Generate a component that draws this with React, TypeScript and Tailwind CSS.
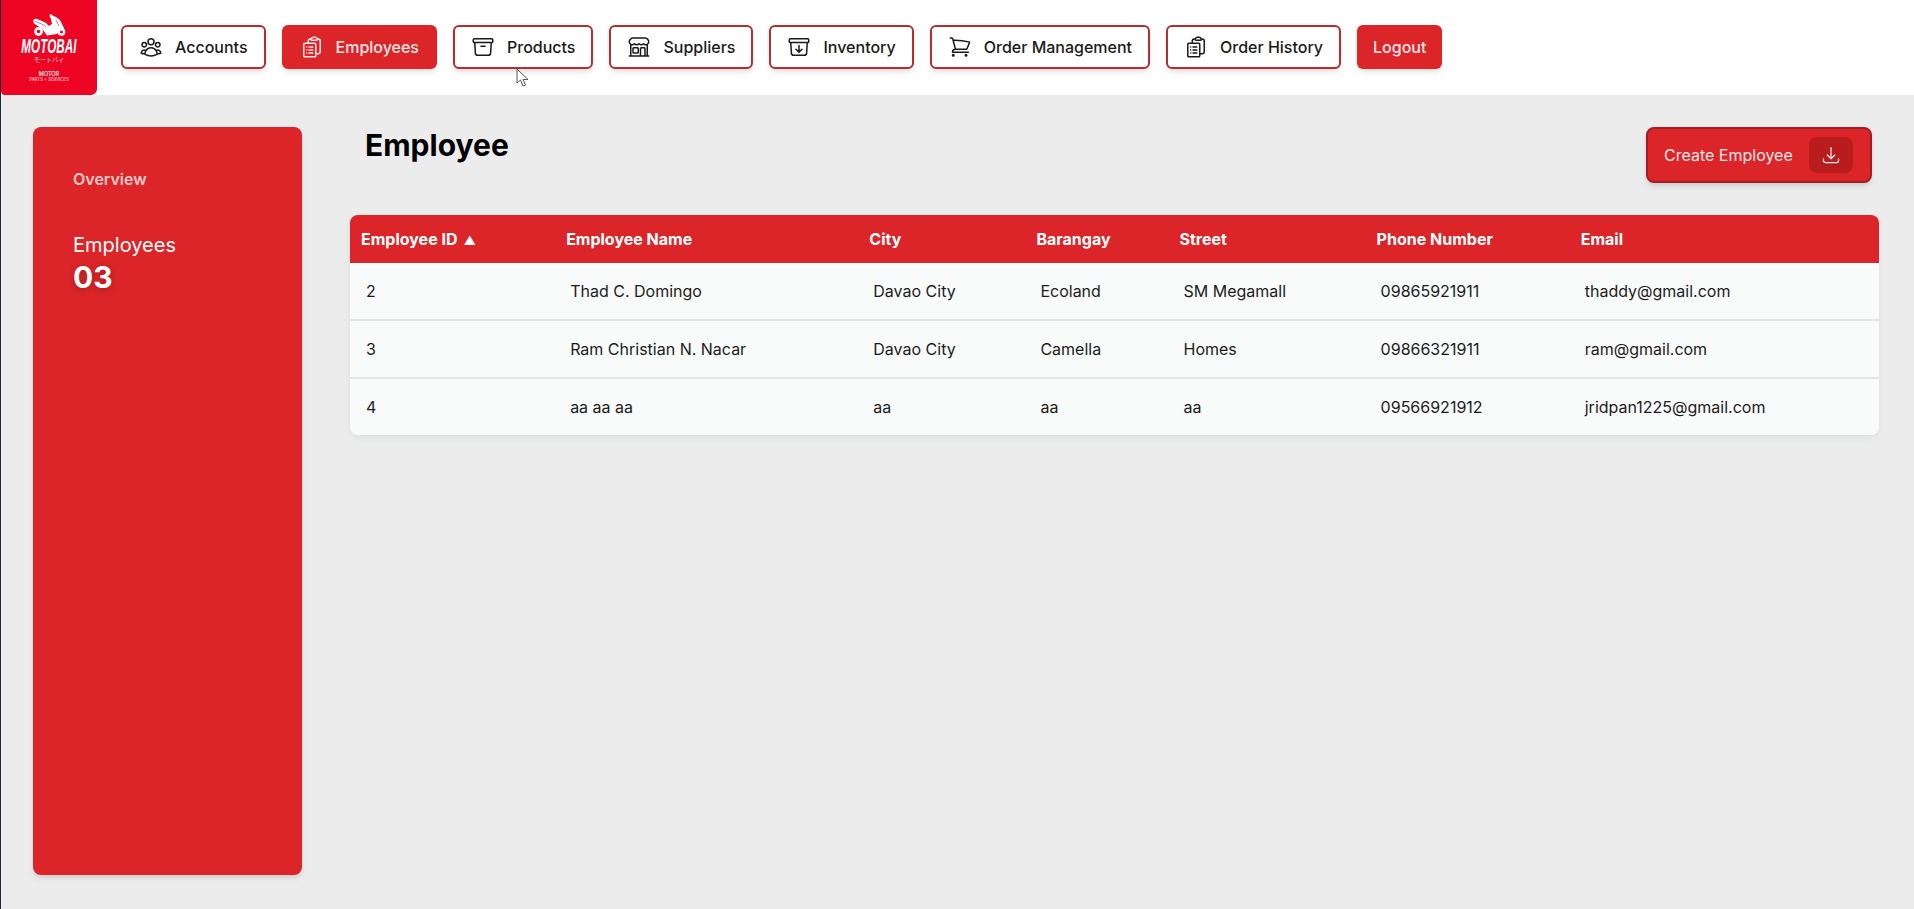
import type { ReactNode } from "react";
import {
  HiOutlineUserGroup,
  HiOutlineClipboardDocumentList,
  HiOutlineArchiveBox,
  HiOutlineBuildingStorefront,
  HiOutlineArchiveBoxArrowDown,
  HiOutlineShoppingCart,
  HiOutlineArrowDownTray,
} from "react-icons/hi2";

type NavItem = {
  label: string;
  icon: ReactNode;
  active?: boolean;
};

const navItems: NavItem[] = [
  { label: "Accounts", icon: <HiOutlineUserGroup className="h-6 w-6" /> },
  { label: "Employees", icon: <HiOutlineClipboardDocumentList className="h-6 w-6" />, active: true },
  { label: "Products", icon: <HiOutlineArchiveBox className="h-6 w-6" /> },
  { label: "Suppliers", icon: <HiOutlineBuildingStorefront className="h-6 w-6" /> },
  { label: "Inventory", icon: <HiOutlineArchiveBoxArrowDown className="h-6 w-6" /> },
  { label: "Order Management", icon: <HiOutlineShoppingCart className="h-6 w-6" /> },
  { label: "Order History", icon: <HiOutlineClipboardDocumentList className="h-6 w-6" /> },
];

const columns = [
  { label: "Employee ID", width: "w-[202px] pl-[11px]", sorted: true },
  { label: "Employee Name", width: "w-[303px] pl-[14px]" },
  { label: "City", width: "w-[167px] pl-[14px]" },
  { label: "Barangay", width: "w-[143px] pl-[14px]" },
  { label: "Street", width: "w-[197px] pl-[14px]" },
  { label: "Phone Number", width: "w-[204px] pl-[14px]" },
  { label: "Email", width: "w-[312px] pl-[14px]" },
];

const employees = [
  ["2", "Thad C. Domingo", "Davao City", "Ecoland", "SM Megamall", "09865921911", "thaddy@gmail.com"],
  ["3", "Ram Christian N. Nacar", "Davao City", "Camella", "Homes", "09866321911", "ram@gmail.com"],
  ["4", "aa aa aa", "aa", "aa", "aa", "09566921912", "jridpan1225@gmail.com"],
];

function Logo() {
  return (
    <div className="flex h-[95px] w-[96px] shrink-0 flex-col items-center rounded-br-md rounded-bl-sm bg-[#ee0523] pt-[13px] text-white">
      <svg viewBox="0 0 34 26" className="h-[26px] w-[34px]" fill="currentColor">
        <path d="M1 7 L4 5.5 L10 8 L14 10 L17 13 L20 11 L19 6 L17.5 3 L18 1 L19.5 1.5 L20.5 2.5 L24 4 L28 7 L31 13 L33 18 L27 18 L25 21 L15 22.5 L11 17 L6 13 L2 10.5 Z" />
        <circle cx="6.5" cy="18.5" r="4.4" />
        <circle cx="29.5" cy="19" r="3.8" />
        <circle cx="6.5" cy="18.5" r="1.8" fill="#ee0523" />
        <circle cx="29.5" cy="19" r="1.5" fill="#ee0523" />
        <path d="M3 8.5 L11 11.5 L14 14" fill="none" stroke="#ee0523" strokeWidth="0.6" />
        <path d="M24 7 L27 13" fill="none" stroke="#ee0523" strokeWidth="0.6" />
      </svg>
      <span className="mt-[-2px] scale-x-[.6] whitespace-nowrap font-['Liberation_Sans',sans-serif] text-[19.5px] leading-[19px] font-bold italic">
        MOTOBAI
      </span>
      <span className="font-['Noto_Sans_CJK_JP',sans-serif] text-[6px] leading-[7px] text-white/80">モートバイ</span>
      <span className="mt-[8px] font-['Inter',sans-serif] text-[5.5px] leading-[6px] font-medium">MOTOR</span>
      <span className="font-['Inter',sans-serif] text-[4.3px] leading-[5px] whitespace-nowrap text-white/85">
        PARTS + SERVICES
      </span>
    </div>
  );
}

function NavButton({ item }: { item: NavItem }) {
  return (
    <button
      type="button"
      className={[
        "flex h-[44px] items-center gap-3 rounded-md border-2 px-4 font-medium shadow-md",
        item.active ? "border-[#db2528] bg-[#db2528] text-[#fde8e8]" : "border-[#b32d33] bg-white text-[#1a1a1a]",
      ].join(" ")}
    >
      {item.icon}
      <span className="whitespace-nowrap">{item.label}</span>
    </button>
  );
}

export default function App() {
  return (
    <div className="relative min-h-screen overflow-hidden border-l border-[#1f2937] bg-[#ececec] font-['Inter',sans-serif]">
      <header className="flex h-[95px] items-center gap-[24px] bg-white">
        <Logo />
        <nav className="flex items-center gap-4 pb-[1px]">
          {navItems.map((item) => (
            <NavButton key={item.label} item={item} />
          ))}
          <button
            type="button"
            className="h-[44px] rounded-md bg-[#db2528] px-4 font-medium whitespace-nowrap text-[#fde8e8] shadow-md"
          >
            Logout
          </button>
        </nav>
      </header>

      <div className="flex pt-8 pr-[35px] pl-[32px]">
        <aside className="h-[748px] w-[269px] shrink-0 rounded-lg bg-[#db2528] px-[40px] pt-[41px] text-white shadow-md">
          <p className="leading-[22px] font-semibold text-[#f6c9c9]">Overview</p>
          <p className="mt-[41px] text-[20px] leading-[28px]">Employees</p>
          <p className="text-[30px] leading-[36px] font-bold [text-shadow:0_2px_6px_rgba(0,0,0,0.25)]">03</p>
        </aside>

        <main className="ml-[48px] min-w-0 flex-1">
          <div className="flex items-start justify-between pr-[7px] pl-[15px]">
            <h1 className="text-[30px] leading-[36px] font-bold text-black">Employee</h1>
            <button
              type="button"
              className="flex h-[56px] w-[226px] items-center justify-between rounded-lg border-2 border-[#a51d24] bg-[#db2528] pr-[17px] pl-[16px] text-[#fde8e8] shadow-md"
            >
              <span className="whitespace-nowrap">Create Employee</span>
              <span className="flex h-9 w-11 items-center justify-center rounded-lg bg-[#b91c1c]">
                <HiOutlineArrowDownTray className="h-5 w-5" />
              </span>
            </button>
          </div>

          <div className="mt-8 overflow-hidden rounded-lg shadow-[0_2px_6px_rgba(0,0,0,0.06)]">
            <table className="w-full table-fixed border-collapse text-left">
              <thead>
                <tr className="h-[48px] bg-[#db2528] text-white">
                  {columns.map((column) => (
                    <th key={column.label} className={`${column.width} font-bold whitespace-nowrap`}>
                      {column.label}
                      {column.sorted ? <span className="ml-[6px] text-[12px]">▲</span> : null}
                    </th>
                  ))}
                </tr>
              </thead>
              <tbody>
                {employees.map((row, index) => (
                  <tr
                    key={row[0]}
                    className={[
                      "h-[57.33px] bg-[#f9fafa] text-[#1c1c1c]",
                      index < employees.length - 1 ? "border-b-2 border-[#e3e5e7]" : "",
                    ].join(" ")}
                  >
                    {row.map((cell, cellIndex) => (
                      <td key={cellIndex} className={`${cellIndex === 0 ? "pl-[16px]" : "pl-[18px]"} whitespace-nowrap`}>
                        {cell}
                      </td>
                    ))}
                  </tr>
                ))}
              </tbody>
            </table>
          </div>
        </main>
      </div>

      {/* recording cursor sitting over the nav */}
      <svg viewBox="0 0 13 20" className="absolute top-[68px] left-[515px] h-[20px] w-[13px]">
        <path
          d="M1 1 L1 15 L4.5 12 L7 18 L9.5 17 L7 11.5 L12 11.5 Z"
          fill="#ffffff"
          stroke="#55595f"
          strokeWidth="1"
          strokeLinejoin="round"
        />
      </svg>
    </div>
  );
}
